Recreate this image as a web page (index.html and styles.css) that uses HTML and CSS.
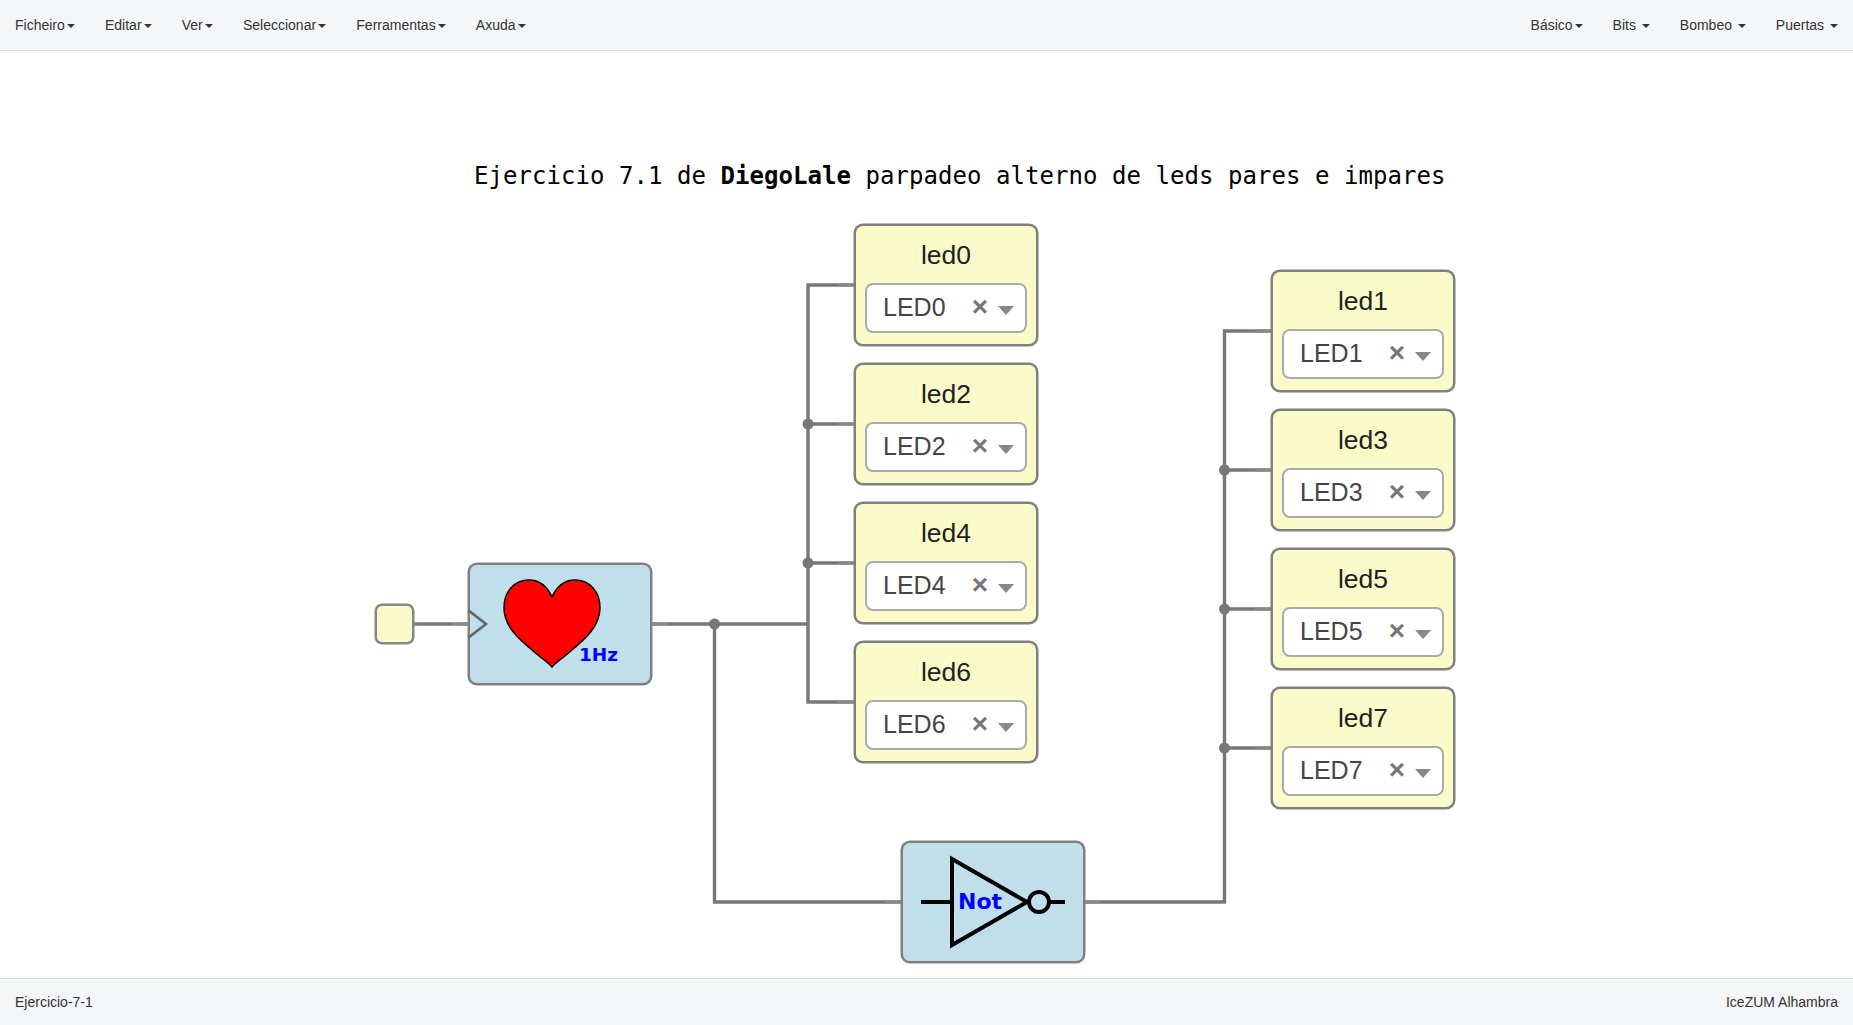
FILE: index.html
```html
<!DOCTYPE html>
<html lang="en">
<head>
    <meta charset="UTF-8">
    <title>Ejercicio-7-1</title>
    <link rel="stylesheet" href="styles.css">
</head>
<body>
    <!-- Top menu -->
    <nav class="navbar">
        <ul class="menu menu-main">
            <li>Ficheiro<span class="caret"></span></li>
            <li>Editar<span class="caret"></span></li>
            <li>Ver<span class="caret"></span></li>
            <li>Seleccionar<span class="caret"></span></li>
            <li>Ferramentas<span class="caret"></span></li>
            <li>Axuda<span class="caret"></span></li>
        </ul>
        <ul class="menu">
            <li>Básico<span class="caret"></span></li>
            <li>Bits <span class="caret"></span></li>
            <li>Bombeo <span class="caret"></span></li>
            <li>Puertas <span class="caret"></span></li>
        </ul>
    </nav>

    <!-- Diagram -->
    <main class="canvas">
        <svg class="wires" width="1853" height="928" viewBox="0 0 1853 928">
            <g class="wire">
                <path d="M414 574H468"/>
                <path d="M652 574H808M714.5 574V852H901"/>
                <path d="M854 235H808V652H854M808 374H854M808 513H854"/>
                <path d="M1085 852H1224.5V281H1271M1224.5 420H1271M1224.5 559H1271M1224.5 698H1271"/>
            </g>
            <!-- the last bit of each wire, next to a port, is thinner -->
            <path class="wire-stub" d="M453 574H468M652 574H668M886 852H901M1085 852H1101M838 235H854M838 374H854M838 513H854M838 652H854M1255 281H1271M1255 420H1271M1255 559H1271M1255 698H1271"/>
            <g class="joint">
                <circle cx="714.5" cy="574" r="5.5"/>
                <circle cx="808" cy="374" r="5.5"/>
                <circle cx="808" cy="513" r="5.5"/>
                <circle cx="1224.5" cy="420" r="5.5"/>
                <circle cx="1224.5" cy="559" r="5.5"/>
                <circle cx="1224.5" cy="698" r="5.5"/>
            </g>
        </svg>

        <h2 class="title">Ejercicio 7.1 de <b>DiegoLale</b> parpadeo alterno de leds pares e impares</h2>

        <div class="input-pin"></div>

        <div class="block clock">
            <svg width="184" height="122" viewBox="0 0 184 122">
                <path class="clk-port" d="M0 47L18 61L0 75"/>
                <path class="heart" d="M84 34C79 23 72 17 61 17C46 17 36 29 36 45C36 66 56 80 70 92C76 97 81 100 84 104C87 100 92 97 98 92C112 80 132 66 132 45C132 29 122 17 107 17C96 17 89 23 84 34Z"/>
                <text class="sym-text hz" x="111" y="98">1Hz</text>
            </svg>
        </div>

        <div class="block not">
            <svg width="184" height="122" viewBox="0 0 184 122">
                <path class="gate" d="M20 61H51M51 18L126 61L51 104ZM149 61H164"/>
                <circle class="gate" cx="138" cy="61" r="10"/>
                <text class="sym-text not-text" x="57" y="68">Not</text>
            </svg>
        </div>

        <!-- Even leds -->
        <div class="block led col-even row-0">
            <div class="led-name">led0</div>
            <div class="led-select"><span class="led-value">LED0</span><span class="clear">×</span><span class="arrow"></span></div>
        </div>
        <div class="block led col-even row-1">
            <div class="led-name">led2</div>
            <div class="led-select"><span class="led-value">LED2</span><span class="clear">×</span><span class="arrow"></span></div>
        </div>
        <div class="block led col-even row-2">
            <div class="led-name">led4</div>
            <div class="led-select"><span class="led-value">LED4</span><span class="clear">×</span><span class="arrow"></span></div>
        </div>
        <div class="block led col-even row-3">
            <div class="led-name">led6</div>
            <div class="led-select"><span class="led-value">LED6</span><span class="clear">×</span><span class="arrow"></span></div>
        </div>

        <!-- Odd leds -->
        <div class="block led col-odd row-0">
            <div class="led-name">led1</div>
            <div class="led-select"><span class="led-value">LED1</span><span class="clear">×</span><span class="arrow"></span></div>
        </div>
        <div class="block led col-odd row-1">
            <div class="led-name">led3</div>
            <div class="led-select"><span class="led-value">LED3</span><span class="clear">×</span><span class="arrow"></span></div>
        </div>
        <div class="block led col-odd row-2">
            <div class="led-name">led5</div>
            <div class="led-select"><span class="led-value">LED5</span><span class="clear">×</span><span class="arrow"></span></div>
        </div>
        <div class="block led col-odd row-3">
            <div class="led-name">led7</div>
            <div class="led-select"><span class="led-value">LED7</span><span class="clear">×</span><span class="arrow"></span></div>
        </div>
    </main>

    <footer class="footer">
        <span>Ejercicio-7-1</span>
        <span>IceZUM Alhambra</span>
    </footer>
</body>
</html>
```

FILE: styles.css
```css
body {
    font-family: 'Liberation Sans', Arial, sans-serif;
    font-size: 14px;
    color: #333;
    margin: 0;
    display: flex;
    flex-direction: column;
    height: 100vh;
    overflow: hidden;
    background-color: #fff;
}

/* Top menu */
.navbar {
    display: flex;
    justify-content: space-between;
    flex: none;
    height: 51px;
    margin-bottom: -1px;
    box-sizing: border-box;
    padding: 0 15px;
    background-color: #f5f6f8;
    border-bottom: 1px solid #d9dee1;
}

.menu {
    display: flex;
    gap: 30px;
    margin: 0;
    padding: 0;
    list-style: none;
    line-height: 50px;
}

.menu-main {
    gap: 30.2px;
}

.caret {
    display: inline-block;
    width: 0;
    height: 0;
    margin-left: 2px;
    vertical-align: middle;
    border-top: 4px solid #333;
    border-left: 4px solid transparent;
    border-right: 4px solid transparent;
}

/* Diagram */
.canvas {
    position: relative;
    flex: 1;
}

.wires {
    position: absolute;
    left: 0;
    top: 0;
}

.wire path {
    fill: none;
    stroke: #777;
    stroke-width: 3.4;
}

.wire-stub {
    fill: none;
    stroke: #888;
    stroke-width: 2.6;
}

.joint circle {
    fill: #777;
}

.title {
    position: absolute;
    left: 474px;
    top: 110px;
    margin: 0;
    font-family: 'DejaVu Sans Mono', monospace;
    font-size: 24px;
    font-weight: normal;
    line-height: 32px;
    letter-spacing: 0.05px;
    color: #000;
    white-space: nowrap;
}

.input-pin {
    position: absolute;
    left: 375px;
    top: 554px;
    width: 39px;
    height: 40px;
    box-sizing: border-box;
    background-color: #fbfbca;
    border: 2px solid #888;
    border-radius: 7px;
    box-shadow: 0 0 0 0.5px #888;
}

.block {
    position: absolute;
    width: 184px;
    height: 122px;
    box-sizing: border-box;
    border: 2px solid #808080;
    border-radius: 9px;
    box-shadow: 0 0 0 0.5px #808080;
}

.block svg {
    display: block;
    margin: -2px;
}

.clock {
    left: 468px;
    top: 513px;
    background-color: #c1dfea;
}

.not {
    left: 901px;
    top: 791px;
    background-color: #c1dfea;
}

.clk-port {
    fill: none;
    stroke: #666;
    stroke-width: 2.6;
}

.heart {
    fill: #f00;
    stroke: #000;
    stroke-width: 1.5;
}

.gate {
    fill: none;
    stroke: #000;
    stroke-width: 4;
}

.sym-text {
    font-family: 'DejaVu Sans', sans-serif;
    font-weight: bold;
    fill: #00f;
}

.hz {
    font-size: 18.5px;
}

.not-text {
    font-size: 22px;
}

/* Led blocks */
.led {
    display: flex;
    flex-direction: column;
    align-items: center;
    padding: 10px 9px 0;
    background-color: #fbfbca;
}

.col-even { left: 854px; }
.col-odd { left: 1271px; }
.col-even.row-0 { top: 174px; }
.col-even.row-1 { top: 313px; }
.col-even.row-2 { top: 452px; }
.col-even.row-3 { top: 591px; }
.col-odd.row-0 { top: 220px; }
.col-odd.row-1 { top: 359px; }
.col-odd.row-2 { top: 498px; }
.col-odd.row-3 { top: 637px; }

.led-name {
    font-size: 26.5px;
    line-height: 38px;
    color: #222;
}

.led-select {
    display: flex;
    align-items: center;
    width: 162px;
    height: 50px;
    margin-top: 9px;
    box-sizing: border-box;
    padding: 0 11px 2px 16px;
    background-color: #fff;
    border: 2px solid #aaa;
    border-radius: 8px;
}

.led-value {
    flex: 1;
    font-size: 25px;
    color: #444;
}

.clear {
    font-size: 28px;
    font-weight: bold;
    line-height: 30px;
    color: #777;
}

.arrow {
    width: 0;
    height: 0;
    margin: 6px 0 0 10px;
    border-top: 9px solid #888;
    border-left: 8px solid transparent;
    border-right: 8px solid transparent;
}

.footer {
    display: flex;
    justify-content: space-between;
    align-items: center;
    flex: none;
    height: 47px;
    box-sizing: border-box;
    padding: 0 15px;
    background-color: #f5f6f8;
    border-top: 1px solid #d9dee1;
}
```
